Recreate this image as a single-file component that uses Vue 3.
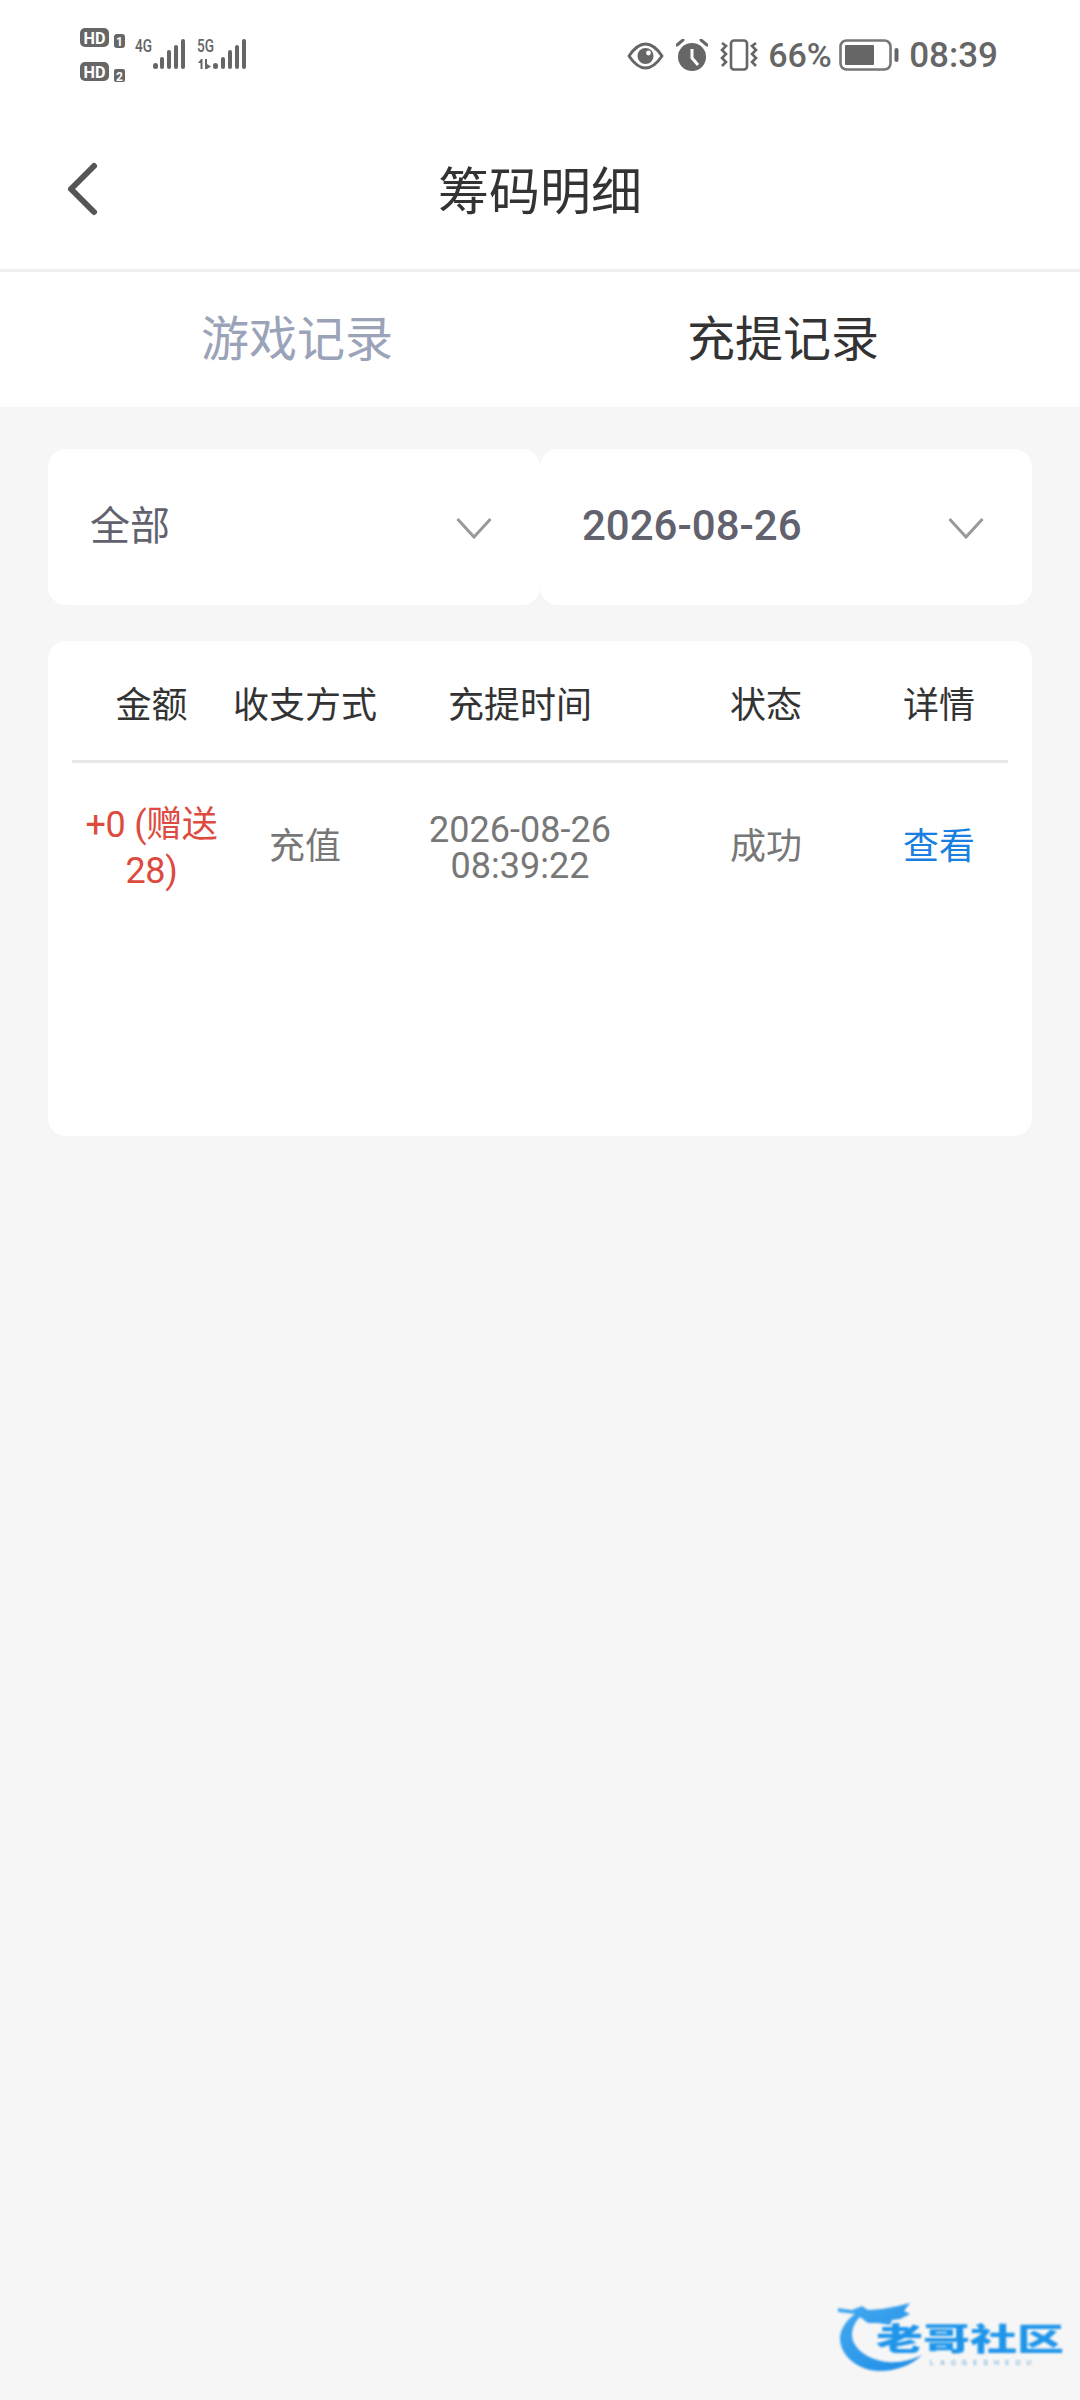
<script setup>
const columns = ['金额', '收支方式', '充提时间', '状态', '详情']
</script>

<template>
  <div class="page">
    <div class="status">
      <svg class="net" width="170" height="60" viewBox="0 0 170 60">
        <rect x="0" y="0" width="29" height="19" rx="5" fill="#666" />
        <text x="3.500" y="15.500" class="hd" textLength="22" lengthAdjust="spacingAndGlyphs">HD</text>
        <rect x="34" y="6" width="11" height="14" rx="3" fill="#666" />
        <text x="39.500" y="18" class="num">1</text>
        <rect x="0" y="34" width="29" height="19" rx="5" fill="#666" />
        <text x="3.500" y="49.500" class="hd" textLength="22" lengthAdjust="spacingAndGlyphs">HD</text>
        <rect x="34" y="41" width="11" height="13" rx="2" fill="#666" />
        <text x="39.500" y="52.500" class="num">2</text>
        <text x="55" y="24" class="gen" textLength="17" lengthAdjust="spacingAndGlyphs">4G</text>
        <text x="117" y="24" class="gen" textLength="17" lengthAdjust="spacingAndGlyphs">5G</text>
        <g fill="#666">
          <rect x="73" y="35" width="5" height="6" rx="2.500" />
          <rect x="80" y="29" width="4" height="12" rx="2" />
          <rect x="87" y="22" width="4" height="19" rx="2" />
          <rect x="94" y="17" width="4" height="24" rx="2" />
          <rect x="101" y="11" width="4" height="30" rx="2" />
          <rect x="133" y="35" width="5" height="6" rx="2.500" />
          <rect x="141" y="29" width="4" height="12" rx="2" />
          <rect x="148" y="22" width="4" height="19" rx="2" />
          <rect x="155" y="17" width="4" height="24" rx="2" />
          <rect x="162" y="11" width="4" height="30" rx="2" />
          <path d="M118 35l3-4h1.500v10h-2v-6zM125 31h2v5l4 2.500-4 2.500h-2z" />
        </g>
      </svg>
      <div class="status-right">
        <svg width="37" height="28" viewBox="0 0 37 28" class="eye">
          <path d="M2 14C8 5 13 2 18.500 2S29 5 35 14c-6 9-11 12-16.500 12S8 23 2 14z" fill="none" stroke="#666" stroke-width="3" stroke-linejoin="round" />
          <circle cx="18.500" cy="14" r="8" fill="#666" />
          <circle cx="21.500" cy="11" r="2.400" fill="#fff" />
        </svg>
        <svg width="32" height="32" viewBox="0 0 32 32" class="alarm">
          <circle cx="16" cy="18" r="14" fill="#666" />
          <path d="M16 10v9l6 7" fill="none" stroke="#fff" stroke-width="3" />
          <path d="M1 6l6-5M31 6l-6-5" fill="none" stroke="#666" stroke-width="3" stroke-linecap="round" />
        </svg>
        <svg width="38" height="32" viewBox="0 0 38 32" class="vibrate">
          <rect x="11" y="1.500" width="16" height="29" rx="3" fill="none" stroke="#666" stroke-width="2.600" />
          <path d="M2 4l4 3-4 4 4 4-4 4 4 4-4 4M36 4l-4 3 4 4-4 4 4 4-4 4 4 4" fill="none" stroke="#666" stroke-width="2.600" />
        </svg>
        <span class="pct">66%</span>
        <svg width="60" height="32" viewBox="0 0 60 32" class="battery">
          <rect x="1.500" y="1.500" width="50" height="29" rx="6" fill="none" stroke="#777" stroke-width="2.600" />
          <rect x="6" y="6" width="29" height="20" rx="1" fill="#666" />
          <rect x="55.500" y="9" width="4" height="14" rx="2" fill="#666" />
        </svg>
        <span class="clock">08:39</span>
      </div>
    </div>

    <header class="nav">
      <svg class="back" width="34" height="56" viewBox="0 0 34 56">
        <path d="M29 5L6 28l23 23" fill="none" stroke="#555" stroke-width="6" stroke-linecap="round" stroke-linejoin="round" />
      </svg>
      <h1 class="title">筹码明细</h1>
    </header>

    <nav class="tabs">
      <div class="tab">游戏记录</div>
      <div class="tab active">充提记录</div>
    </nav>

    <main class="content">
      <div class="filters">
        <div class="select">
          <span class="sel-text">全部</span>
          <svg class="caret" width="36" height="22" viewBox="0 0 36 22"><path d="M1.500 2L18 20 34.500 2" fill="none" stroke="#999" stroke-width="3" /></svg>
        </div>
        <div class="select">
          <span class="sel-text date">2026-08-26</span>
          <svg class="caret" width="36" height="22" viewBox="0 0 36 22"><path d="M1.500 2L18 20 34.500 2" fill="none" stroke="#999" stroke-width="3" /></svg>
        </div>
      </div>

      <section class="card">
        <div class="grid head">
          <div v-for="c in columns" :key="c">{{ c }}</div>
        </div>
        <div class="grid row">
          <div class="amount">+0 (赠送 28)</div>
          <div class="single">充值</div>
          <div class="time">2026-08-26<br />08:39:22</div>
          <div class="single">成功</div>
          <div class="single link">查看</div>
        </div>
      </section>
    </main>

    <div class="watermark">
      <svg class="dragon" width="100" height="72" viewBox="0 0 100 72">
        <defs>
          <linearGradient id="dr" x1="0" y1="0" x2="1" y2="1">
            <stop offset="0" stop-color="#45aaf0" />
            <stop offset="1" stop-color="#1d8be6" />
          </linearGradient>
        </defs>
        <path d="M0 5l14 2 10-4 6 4 14-1 16-3 12-3-6 8 6 3-10 5-8 1-2 5-12-2H30l-8-6c-8 8-10 18-6 26 6 12 22 18 34 19 12 1 24-2 34-7-10 10-26 16-42 16C20 68 1 52 2 34c1-10 8-18 15-23L0 9z" fill="url(#dr)" />
      </svg>
      <div class="brand">老哥社区</div>
      <div class="brand-sub">LAOGESHEOU</div>
    </div>
  </div>
</template>

<style scoped>
.page {
  position: relative;
  width: 1080px;
  height: 2400px;
  overflow: hidden;
  background: #f6f6f6;
  font-family: Roboto, "Noto Sans CJK SC", sans-serif;
}
.status {
  height: 84px;
  background: #fff;
  display: flex;
  justify-content: space-between;
  padding: 28px 82px 0 80px;
  box-sizing: border-box;
  color: #666;
}
.net { display: block; }
.hd {
  font: 700 16px Roboto, sans-serif;
  fill: #fff;
}
.num {
  font: 700 12px Roboto, sans-serif;
  fill: #fff;
  text-anchor: middle;
}
.gen {
  font: 500 18px Roboto, sans-serif;
  fill: #666;
}
.status-right {
  display: flex;
  align-items: center;
  height: 54px;
}
.eye { margin-right: 12px; margin-top: 1px; }
.alarm { margin-right: 12px; }
.vibrate { margin-right: 10px; }
.pct {
  font-size: 34px;
  font-weight: 500;
  width: 63px;
  margin-right: 8px;
  white-space: nowrap;
}
.battery { margin-right: 10px; }
.clock {
  font-size: 35px;
  font-weight: 500;
  white-space: nowrap;
}
.nav {
  height: 185px;
  background: #fff;
  border-bottom: 3px solid #eeeeee;
  display: flex;
  align-items: center;
  position: relative;
  padding-left: 65px;
}
.back { display: block; margin-top: 25px; }
.title {
  margin: 0;
  font-size: 51px;
  font-weight: 400;
  color: #333;
  position: absolute;
  left: 0;
  right: 0;
  top: 74px;
  line-height: 70px;
  text-align: center;
}
.tabs {
  height: 135px;
  background: #fff;
  display: flex;
  padding: 0 54px;
}
.tab {
  flex: 1;
  text-align: center;
  font-size: 48px;
  line-height: 135px;
  color: #9aa3b8;
}
.tab.active { color: #333; }
.content { padding: 42px 48px 0; }
.filters { display: flex; }
.select {
  flex: 1;
  height: 156px;
  background: #fff;
  border-radius: 18px;
  display: flex;
  align-items: center;
  justify-content: space-between;
  padding: 0 48px 0 42px;
  box-sizing: border-box;
}
.sel-text {
  font-size: 40px;
  color: #62626f;
  margin-top: -8px;
}
.date {
  font-size: 42px;
  font-weight: 500;
  margin-top: -4px;
}
.caret { margin-top: 1px; display: block; }
.card {
  margin-top: 36px;
  height: 495px;
  background: #fff;
  border-radius: 18px;
  padding: 0 24px;
  box-sizing: border-box;
}
.grid {
  display: grid;
  grid-template-columns: 159px 148px 282px 210px 136px;
  align-items: center;
  text-align: center;
  font-size: 36px;
}
.head {
  height: 122px;
  padding-top: 2px;
  box-sizing: border-box;
  color: #333;
  border-bottom: 3px solid #e8e8e8;
}
.row {
  height: 166px;
  color: #777;
}
.single { margin-bottom: 6px; }
.amount {
  color: #dd4a40;
  line-height: 46px;
  letter-spacing: -0.3px;
  margin-top: 3px;
}
.time {
  line-height: 36px;
  margin-top: 3px;
}
.link { color: #1a7fe0; }
.watermark {
  position: absolute;
  left: 838px;
  top: 2303px;
  width: 226px;
  height: 72px;
  filter: blur(0.8px);
}
.dragon { position: absolute; left: 0; top: 0; }
.brand {
  position: absolute;
  left: 38px;
  top: 18px;
  font-size: 47px;
  line-height: 36px;
  font-weight: 900;
  color: #1f95ea;
  white-space: nowrap;
  transform: scaleY(0.66);
}
.brand-sub {
  position: absolute;
  left: 92px;
  top: 56px;
  font-size: 7px;
  line-height: 8px;
  letter-spacing: 6.300px;
  color: #5a9ccc;
  white-space: nowrap;
}
</style>
